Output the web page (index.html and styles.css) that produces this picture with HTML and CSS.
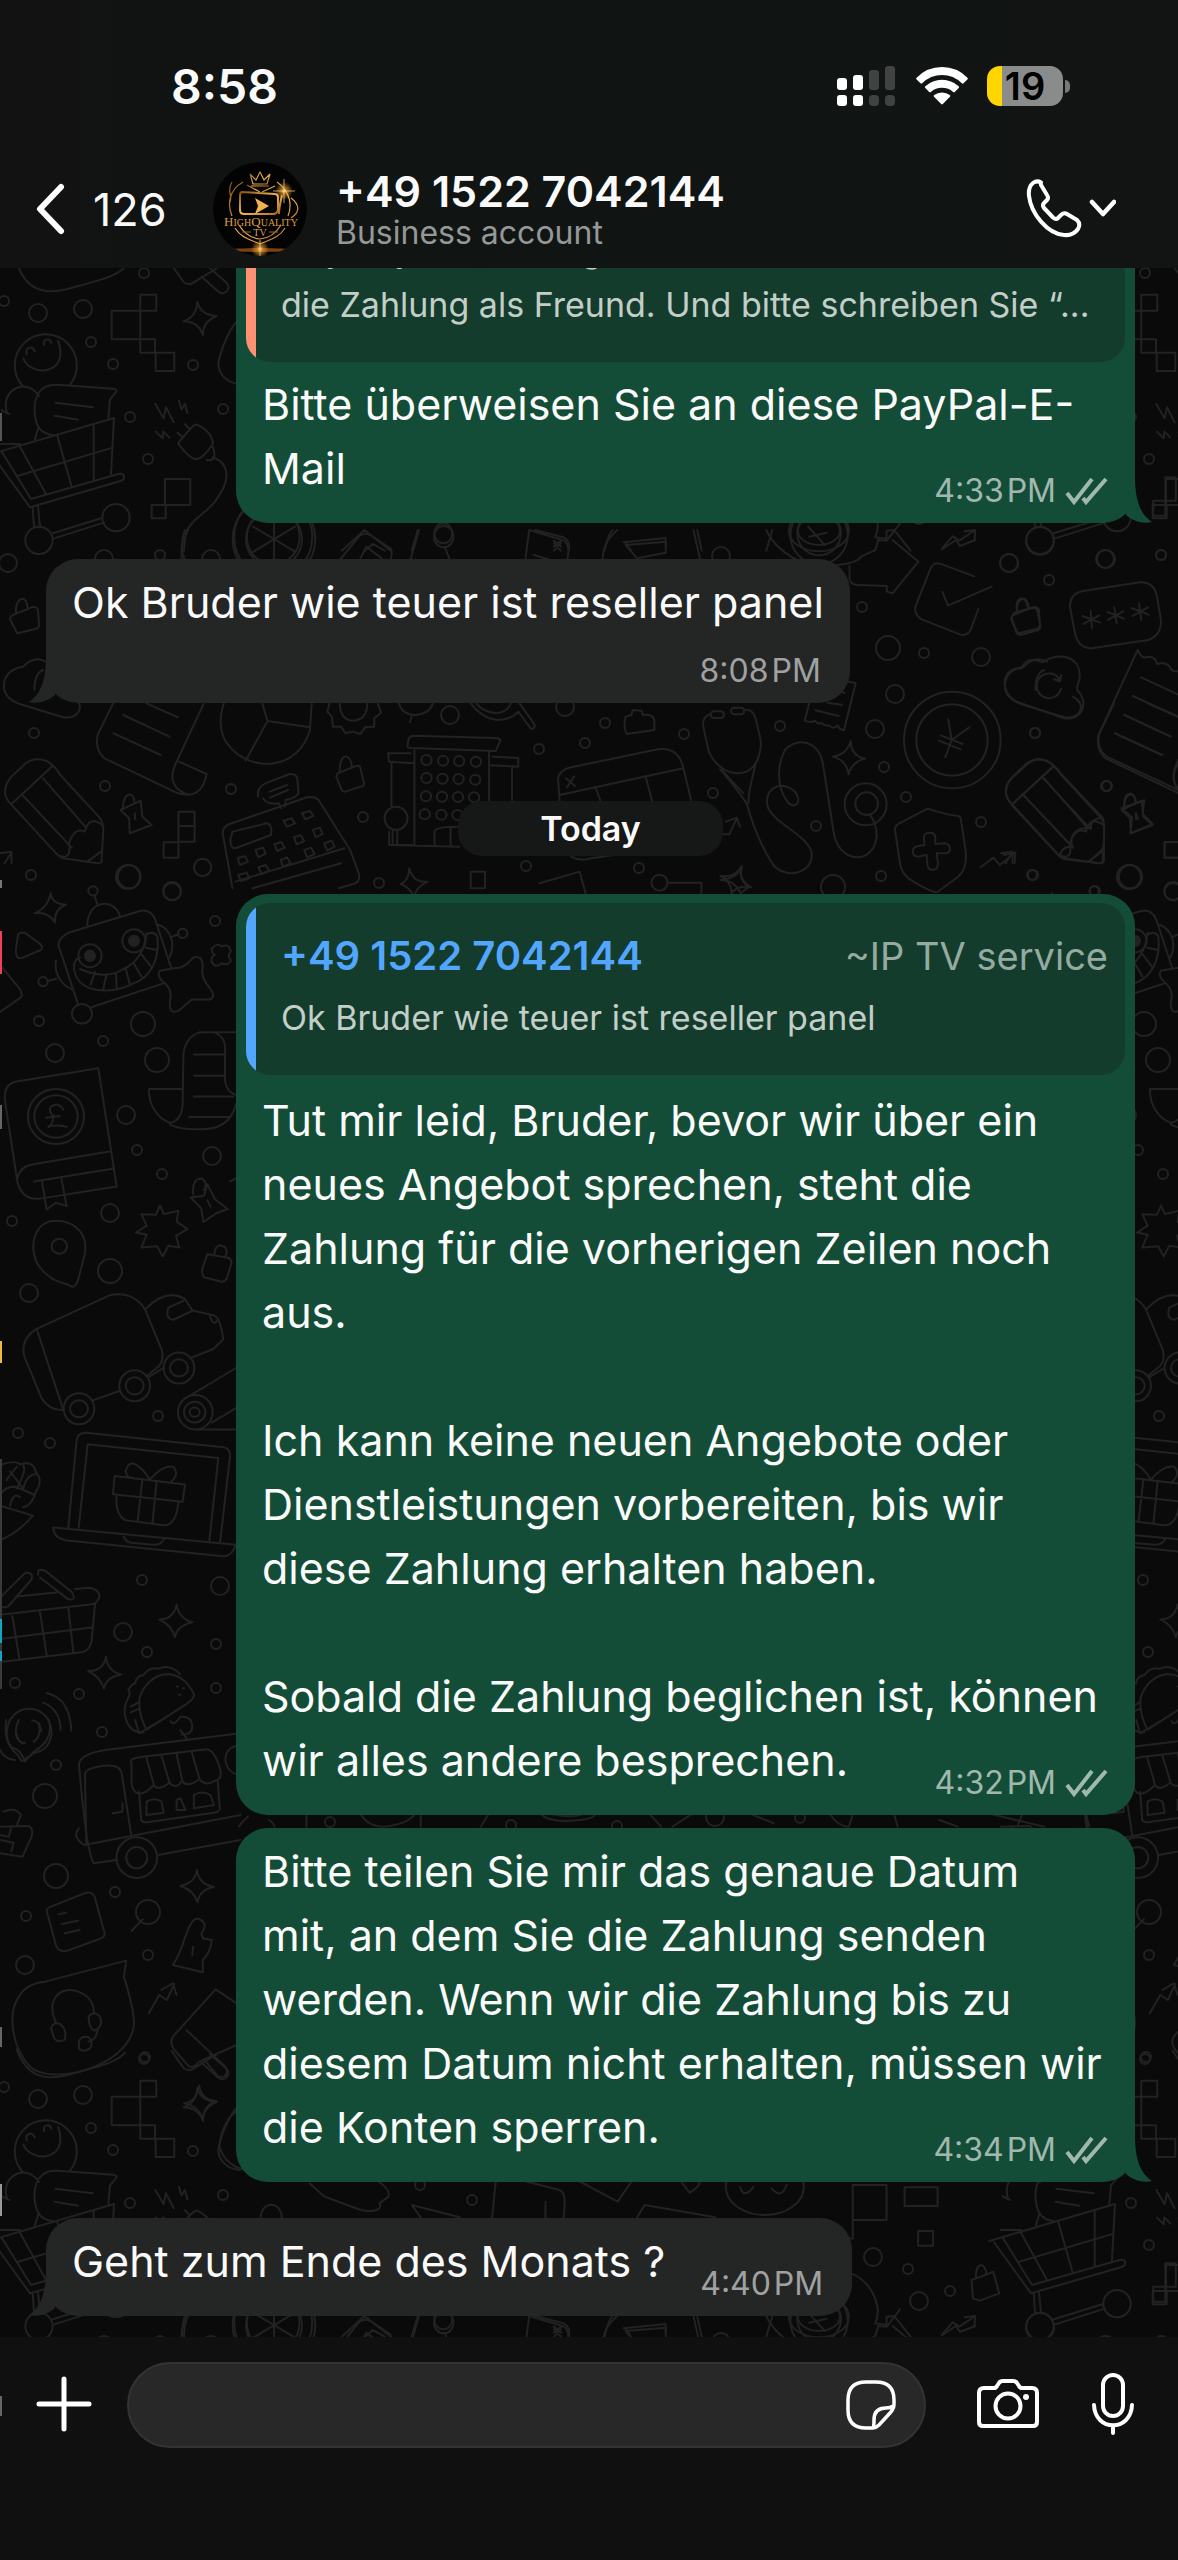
FILE: index.html
```html
<!DOCTYPE html>
<html lang="de">
<head>
<meta charset="utf-8">
<meta name="viewport" content="width=device-width, initial-scale=1">
<title>+49 1522 7042144</title>
<link rel="stylesheet" href="styles.css">
</head>
<body>
<svg class="wallpaper" aria-hidden="true">
  <defs>
    <g id="tile">
      <g transform="matrix(.3333 0 0 .3333 0 260)">
        <path d="M50 10C80 90 130 105 200 88C300 60 350 50 375 20M515 15L550 65Q565 80 585 65L650 25M605 50L655 95C675 110 695 85 680 68L630 25"/>
        <path d="M335 152H421V238H335ZM421 104H469V152H421ZM421 238H465V278H421ZM467 278H523V333H467Z"/>
        <path d="M592 126Q602 165 650 168Q608 185 609 225Q595 185 551 184Q590 170 592 126Z"/>
        <path d="M68 378A93 93 0 1 1 210 374M70 295C90 345 175 345 181 285Q182 262 174 243M80 283C74 262 98 255 104 274M132 255C128 235 150 232 154 249"/>
        <path d="M28 462Q10 455 5 450M22 460C0 400 60 360 100 390Q112 398 117 408M170 374L340 386Q355 388 347 398L330 418L325 475M170 374C120 372 100 410 104 460C108 500 120 520 160 526M166 428L278 442M163 467L234 479M116 500L104 540"/>
        <path d="M-35 585L342 474L333 642M5 575L93 717L355 642C375 636 378 658 362 663L90 742L-20 590M60 560L138 702M172 528L215 680M281 495V660M52 648L338 563M0 552H60M98 740L102 800M114 738L120 800M158 820L306 774M160 836L312 788"/>
        <circle cx="117" cy="841" r="41"/><circle cx="348" cy="773" r="41"/>
        <path d="M466 432L491 475L498 442L521 487M537 422L544 448L555 432L562 460M468 515L488 535L490 514L508 533M534 550C560 520 580 490 592 494Q640 520 638 553Q610 595 590 598Q570 598 534 550ZM555 493L569 507M533 518L547 530M638 560Q655 605 620 600M638 592C690 610 690 660 655 710C620 770 560 770 545 860V900"/>
        <path d="M495 657H571V735H495ZM455 735H497V775H455ZM710 185C680 220 660 280 655 310C655 350 690 370 720 372"/>
        <circle cx="822" cy="838" r="124"/><circle cx="822" cy="838" r="84"/>
        <path d="M822 770V900M760 800L885 875M885 800L760 875"/>
      </g>
      <g transform="matrix(.7513 0 0 .3333 0 394)">
        <path d="M412 10L432 50L480 90C500 100 510 85 505 70L517 50Q520 25 500 0M548 75L612 112M548 75L560 112M692 0L745 30Q755 40 750 112M726 65V112M660 0L655 112M768 0L822 65L842 0M858 75L952 112M858 75L848 112M905 0L918 38Q935 12 930 5M1135 15H1180V120H1135ZM1204 22H1248V78H1204ZM1222 153H1242V197H1222Z"/>
        <ellipse cx="1018" cy="20" rx="52" ry="85"/><path d="M985 20Q990 60 1003 20M1027 25Q1040 60 1047 15M1112 170L1135 176V120M1130 278C1160 300 1175 380 1165 430L1180 435V410L1190 408L1212 470M1255 460L1268 427L1277 440L1298 408M1284 412L1298 408L1297 440"/>
        <path d="M1308 288L1322 275L1330 340L1304 362L1295 355L1293 300ZM1299 295C1298 245 1312 245 1313 283M1535 365H1551V320H1565V250H1551V320H1535Z"/>
        <ellipse cx="1090" cy="410" rx="40" ry="62"/><ellipse cx="1090" cy="410" rx="28" ry="43"/><ellipse cx="361" cy="112" rx="14" ry="38"/><ellipse cx="590" cy="418" rx="12" ry="30"/>
        <path d="M245 470Q245 430 250 408M455 470L485 408L520 470M486 470L496 450L512 470M548 470L556 408M712 408L750 430Q760 440 757 470M737 440L747 458M747 440L737 458M805 470Q808 430 815 408M830 445L886 432V458M840 470L832 445M928 408L934 470M1020 470L1028 408"/>
      </g>
      <g transform="matrix(.574 0 0 .3333 0 530)">
        <ellipse cx="476" cy="20" rx="68" ry="125"/><ellipse cx="476" cy="20" rx="46" ry="83"/>
        <path d="M322 90Q312 50 322 0M592 90L625 20Q632 5 645 15L680 55Q685 70 680 90M628 85L638 50L665 85M715 90L730 0M775 52L784 90M915 90L922 0L980 30Q995 40 988 90M965 40L977 62M977 40L965 62M930 75L955 88M1050 90C1050 30 1070 10 1075 0M1090 45L1160 35V68L1110 85ZM1220 90L1208 0"/>
        <ellipse cx="773" cy="20" rx="17" ry="32"/><ellipse cx="1427" cy="15" rx="50" ry="88"/><ellipse cx="1427" cy="10" rx="38" ry="66"/>
        <path d="M1410 20L1440 8M1408 -10L1437 45M1335 0Q1350 60 1400 100L1450 107Q1495 100 1500 80L1525 60L1530 30L1545 32L1568 -20M1480 107V150Q1485 168 1500 165L1545 168V185L1555 190L1600 95L1555 30"/>
        <path d="M30 310L18 270Q16 262 22 255L55 232Q65 228 66 240L68 285Q68 295 60 298ZM28 250C25 200 48 190 48 236"/>
        <path d="M80 395Q60 375 40 410Q5 420 7 475Q10 510 40 525L110 562C140 570 150 520 125 500M75 420Q60 430 60 480"/>
        <path d="M197 520L170 615Q165 660 182 685L310 790C340 805 355 780 360 732L312 695M355 520L305 705C295 745 300 780 330 795M255 520L310 562M215 555L295 620M198 610L280 675"/>
        <path d="M390 520Q375 600 400 650C440 730 520 720 540 600L543 520M457 520L466 573L540 592M466 573L428 692"/>
        <path d="M574 520L570 545L578 560L580 590L594 590L602 610L615 605L628 612L636 592L652 590L652 565L664 548L658 520M592 520Q592 570 615 572Q640 570 640 520M695 520Q700 555 725 555Q750 550 754 520M718 555L714 577M820 520Q840 565 865 570Q890 570 903 545L925 597Q935 595 930 580L905 520M830 520Q840 545 865 550Q885 545 890 520"/>
        <path d="M1090 560L1100 555L1102 540L1118 542L1120 555Q1140 550 1140 575V600L1092 612Q1085 590 1090 560Z"/>
        <path d="M712 625L710 645Q708 652 716 654L864 663L872 630Q870 625 862 624L722 617Q714 618 712 625ZM722 656V945H678V905M852 663V815M678 695L676 670L715 670M678 695L722 700M858 680L903 684V710L855 706M682 700V830M892 710V810M678 945L800 950M757 945V905Q757 890 800 890M785 945V892"/>
        <ellipse cx="690" cy="865" rx="20" ry="35"/><path d="M684 900V942M692 900V942"/>
        <g><ellipse cx="743" cy="690" rx="9" ry="15"/><ellipse cx="772" cy="692" rx="9" ry="15"/><ellipse cx="800" cy="693" rx="9" ry="15"/><ellipse cx="829" cy="695" rx="9" ry="15"/><ellipse cx="743" cy="744" rx="9" ry="15"/><ellipse cx="771" cy="746" rx="9" ry="15"/><ellipse cx="799" cy="747" rx="9" ry="15"/><ellipse cx="828" cy="749" rx="9" ry="15"/><ellipse cx="742" cy="799" rx="9" ry="15"/><ellipse cx="770" cy="800" rx="9" ry="15"/><ellipse cx="798" cy="801" rx="9" ry="15"/><ellipse cx="826" cy="802" rx="9" ry="15"/><ellipse cx="740" cy="853" rx="9" ry="15"/><ellipse cx="769" cy="854" rx="9" ry="15"/><ellipse cx="797" cy="855" rx="9" ry="15"/></g>
        <path d="M975 815L972 745Q975 720 995 712L1140 660Q1180 645 1190 710L1204 810M975 795L1190 715M1038 775L1046 812M1125 740L1136 812M986 745L1002 768M1000 740L988 772M995 980Q1010 995 1030 985L1070 975"/>
        <path d="M10 800Q5 770 20 740L45 700Q60 680 80 692Q95 705 105 735L172 860Q180 875 180 900L177 990Q178 1000 170 1000L110 985Q102 980 95 965L15 815ZM20 822L90 710M40 797L125 953M75 745L150 893M105 978Q125 990 120 940Q130 890 148 905Q155 855 178 885M152 995L178 962"/>
        <path d="M450 800Q445 770 470 755L505 732Q515 730 518 745L520 790Q515 805 498 810L496 830M470 785L500 765M470 803L502 780M458 805Q465 825 486 820L490 835M405 1075L388 910Q388 890 400 882L535 802Q548 798 555 810L610 960L625 1030Q628 1050 620 1060L590 1075M410 1055L600 955M440 1075L594 1000M405 905L465 880Q475 885 472 915L410 955Q400 955 402 925Z"/>
        <path d="M494 872L508 865L514 880L500 890ZM526 850L540 843L546 858L532 868ZM445 960L458 953L463 970L450 982ZM478 943L490 936L496 953L483 963ZM512 922L524 915L530 933L517 943ZM545 900L557 893L562 912L550 922ZM414 985L427 978L432 995L418 1005ZM450 1012L463 1005L469 1022L456 1032ZM489 990L500 982L506 1000L493 1010ZM530 960L542 953L548 972L535 982ZM565 940L578 932L583 950L570 962ZM415 1035L430 1028L434 1045L420 1053Z"/>
        <path d="M588 730L620 708Q628 705 628 715L634 760Q635 768 628 770L602 785Q595 785 594 775L586 740ZM592 728C590 665 612 668 613 712M210 840L245 812L248 860L264 885L226 910L225 865ZM214 835C215 780 235 785 234 818M235 850V868M311 845H339V935H311ZM311 888H339M285 937H311V983H285ZM0 970L20 965L20 1000M20 967L8 1000"/>
        <path d="M713 1015Q720 1060 745 1055Q722 1075 722 1100Q712 1070 698 1062Q712 1055 713 1015ZM820 1025H845V1075H820ZM940 1060L1010 1025L1020 1090M1293 1010Q1285 1050 1305 1070L1290 1090Q1280 1050 1255 1050Q1285 1045 1293 1010ZM1165 1058H1222V1090"/>
        <ellipse cx="225" cy="1040" rx="20" ry="35"/><ellipse cx="353" cy="1012" rx="15" ry="26"/><ellipse cx="1149" cy="1058" rx="14" ry="24"/><ellipse cx="300" cy="1085" rx="15" ry="26"/>
      </g>
      <g transform="matrix(.3333 0 0 .3333 700 540)">
        <path d="M823 109L720 71Q700 66 692 85L646 200Q642 225 665 238L780 283Q800 290 812 270L835 207M727 155L744 197L875 140M725 28L768 0M768 0L780 18L825 0"/>
        <path d="M946 217L998 204Q1008 203 1012 212L1022 260Q1020 270 1010 272L962 285Q952 285 948 275L936 235Q936 222 946 217ZM952 213C940 170 980 160 984 205"/>
        <path d="M1150 153L1320 127Q1360 125 1370 165L1383 240Q1385 285 1345 300L1175 325Q1135 325 1125 280L1110 200Q1110 160 1150 153ZM1172 212L1176 264M1148 228L1200 248M1150 252L1198 226M1243 202L1250 250M1223 216L1272 236M1224 240L1270 214M1317 190L1324 240M1295 204L1346 224M1298 228L1344 202"/>
        <path d="M965 385Q980 345 1028 367C1070 335 1150 345 1138 420Q1130 440 1132 450C1170 490 1145 545 1090 534L950 485C895 455 905 380 965 385ZM1083 447A37 37 0 1 1 1080 420M1084 406L1080 424L1062 418"/>
        <circle cx="757" cy="600" r="145"/><circle cx="756" cy="600" r="107"/>
        <path d="M745 538L755 600L808 562M755 600L736 652M722 586L788 612M717 602L782 628"/>
        <path d="M1313 330L1200 575Q1185 620 1220 650L1440 752M1313 330Q1325 360 1345 350Q1368 350 1372 372Q1395 365 1408 378Q1415 400 1440 392M1323 412L1440 466M1298 468L1440 532M1272 524L1412 589M1247 580L1387 645M1437 670Q1410 700 1430 745"/>
        <path d="M438 423L467 430L432 571Q420 570 412 556Q400 570 388 556Q375 560 365 549Q355 555 345 542Q335 550 314 542L328 488M418 452L434 459M382 488L426 494M347 511L416 528"/>
        <rect x="32" y="514" width="40" height="20" rx="10"/><rect x="93" y="503" width="40" height="20" rx="10"/>
        <path d="M32 522Q5 530 10 560L25 630C50 700 140 730 172 660Q188 620 180 590L168 540Q160 505 133 510M65 690L130 760M168 665L150 745Q145 770 145 790M60 688Q90 720 140 790Q170 900 220 975C260 1020 340 1000 335 940C330 890 220 850 203 800C190 750 240 715 285 755C310 790 280 810 262 785C230 740 230 680 255 630C290 590 360 600 370 680L400 870C410 970 520 980 530 890Q530 850 510 825"/>
        <circle cx="497" cy="793" r="63"/><circle cx="500" cy="791" r="34"/>
        <path d="M452 604Q455 650 496 656Q455 665 446 703Q440 660 398 650Q440 645 452 604ZM123 980Q115 1020 153 1042Q110 1035 95 1060Q92 1020 61 1008Q105 1015 123 980Z"/>
        <path d="M683 806Q740 825 775 828Q783 830 783 840L798 940Q800 990 775 1010L712 1056Q700 1060 640 1025Q605 1005 600 970L585 870Q583 860 595 852ZM672 895Q670 878 690 878Q705 878 706 892V912L735 910Q750 912 750 928Q748 940 735 940H710L714 970Q714 990 697 990Q682 988 682 970L680 945L655 950Q638 948 638 932Q640 920 655 918L674 915Z"/>
        <path d="M842 982L880 953L900 975L944 940M912 945L946 938L944 970M68 883H88L110 835M78 845L110 833L120 860"/>
        <path d="M920 770Q912 740 930 720L985 670Q1020 645 1058 675L1205 830Q1213 840 1212 860V960Q1212 970 1200 970L1095 958Q1080 955 1070 940L935 795ZM935 795L1060 680M970 765L1120 923M1025 710L1172 868M1080 945Q1090 915 1118 922Q1105 885 1140 867Q1170 860 1172 868Q1170 835 1205 835M1168 965L1210 925"/>
        <path d="M1265 805L1333 781L1328 822L1358 852L1292 880L1296 832ZM1275 800C1265 755 1305 745 1308 788M1308 820L1314 838M1440 906H1394V953H1440"/>
      </g>
      <g transform="matrix(.3333 0 0 .5741 0 880)">
        <path d="M152 23Q155 42 198 43Q162 50 165 74Q145 55 104 58Q145 48 152 23ZM48 120L54 95Q60 90 75 92L120 111Q132 118 122 122L65 136Q45 138 48 120ZM0 148L60 190Q70 200 62 205L0 230"/>
        <path d="M205 92L420 54Q450 50 465 68L513 152M262 82C260 35 340 30 360 62M293 43L282 26M475 78C510 85 530 110 508 135M512 100L536 94M143 176L170 172M168 140C160 165 190 185 215 190M205 92Q165 105 180 122L235 218M272 222L490 180"/>
        <ellipse cx="279" cy="19" rx="14" ry="8"/><ellipse cx="548" cy="93" rx="14" ry="8"/><ellipse cx="129" cy="177" rx="14" ry="8"/><ellipse cx="270" cy="132" rx="35" ry="20"/><ellipse cx="402" cy="106" rx="35" ry="20"/><ellipse cx="246" cy="233" rx="30" ry="17"/>
        <ellipse class="solid" cx="270" cy="132" rx="15" ry="9"/><ellipse class="solid" cx="402" cy="106" rx="15" ry="9"/>
        <path d="M222 148C220 200 340 200 400 180C450 170 480 140 472 98Q462 88 440 95M222 148Q225 138 240 135M240 155Q320 175 370 155Q430 140 440 92M272 182L285 160M310 189L320 164M350 189L348 163M390 183L378 156M424 168L402 146M452 150L425 130M470 122L438 118"/>
        <path d="M480 158Q470 165 485 175Q520 190 510 210Q505 235 535 228L575 208L630 208Q648 203 632 190Q600 170 608 150Q608 130 580 135Q550 155 530 153ZM635 120Q650 108 665 116Q690 110 692 125Q680 130 693 140Q685 150 665 145Q645 155 635 142Q632 135 645 130Q635 128 635 120Z"/>
        <path d="M708 265H600Q550 275 550 310L548 390Q545 420 510 423C470 415 445 390 447 364H548M645 266Q680 275 675 300V350Q680 370 710 375M510 426Q540 435 600 434Q690 435 708 390M582 304H672M582 341H672M582 377H700M568 413H690M708 520L690 525"/>
        <path d="M15 385Q10 355 50 351L295 328L350 534L120 555Q65 558 52 525ZM52 520Q60 498 100 495L328 473M102 525L338 503M126 525L140 574L168 562L200 568L184 520"/>
        <ellipse cx="168" cy="412" rx="84" ry="48"/><ellipse cx="168" cy="412" rx="65" ry="37"/><path d="M190 400Q175 385 152 395Q145 405 160 410Q160 425 145 430Q170 425 200 430M138 414L180 411"/>
        <path d="M480 567L492 582L535 576L530 595L562 608L528 620L538 640L505 637L488 656L472 638L424 640L440 618L408 614L440 602L424 582L468 583ZM572 553L612 550L622 530L645 556L683 573L650 580L610 596L604 572ZM580 548Q575 520 605 520Q625 528 612 540M622 558L632 569M622 652L685 658Q698 662 693 670L680 695Q670 702 660 699L612 692Q602 685 610 672ZM643 653Q645 635 665 637Q688 640 676 657"/>
        <path d="M205 705Q225 715 235 695L255 650C265 610 210 590 155 594C95 600 85 650 120 675Q150 698 205 705Z"/><ellipse cx="178" cy="638" rx="23" ry="13"/>
        <path d="M110 782L330 723Q400 715 435 748L485 818Q495 840 470 850L440 864M358 890L280 906M190 923Q150 925 125 903L73 830Q60 800 110 782ZM435 748Q500 710 555 730L578 750L640 758Q660 760 670 800L640 817L570 833M578 750L520 766Q495 765 505 745L550 733M630 760Q640 780 655 765M448 865L490 850"/>
        <ellipse cx="237" cy="921" rx="46" ry="27"/><ellipse cx="237" cy="921" rx="27" ry="15"/><ellipse cx="404" cy="881" rx="46" ry="27"/><ellipse cx="404" cy="881" rx="27" ry="15"/><ellipse cx="537" cy="850" rx="46" ry="27"/><ellipse cx="537" cy="850" rx="27" ry="15"/><ellipse cx="586" cy="927" rx="52" ry="30"/><ellipse cx="584" cy="927" rx="32" ry="18"/><ellipse cx="584" cy="927" rx="15" ry="8"/>
        <path d="M570 898L708 850M635 945L708 920M590 957H708"/>
        <path d="M205 1128L230 975Q235 962 260 963L670 988Q692 990 690 1005L660 1155M236 1128L263 983L655 1007L628 1152M160 1128L708 1158Q695 1178 670 1178L195 1150Q160 1145 160 1128ZM370 1140Q375 1155 400 1155L460 1158Q485 1158 492 1148M344 1038L555 1053L548 1083L339 1070ZM350 1073Q345 1105 375 1115L490 1124Q530 1124 535 1083M427 1044L413 1117M470 1047L457 1122M450 1044C410 1010 385 1010 377 1030Q380 1042 400 1041M450 1044Q490 1018 520 1022Q540 1035 512 1049"/>
        <path d="M5 1018Q50 1010 60 1018Q100 1010 108 1032Q130 1045 108 1065Q95 1090 70 1092M20 1045L50 1022M30 1030L70 1060Q80 1035 108 1035M50 1060Q80 1030 70 1020M0 1070Q30 1050 60 1060L100 1070M30 1090Q40 1065 60 1075M0 1090L98 1107Q60 1135 0 1150"/>
        <path d="M0 1250L75 1207Q100 1205 95 1218L25 1265Q5 1270 0 1262M115 1210Q110 1198 135 1203L215 1240Q232 1255 205 1253L120 1215M50 1248L170 1241M225 1235L265 1233Q300 1235 298 1250Q290 1262 270 1262L0 1280M285 1262L275 1325Q270 1343 245 1345L0 1362M37 1282L58 1356M120 1275L140 1350M205 1268L220 1345M0 1322L275 1302"/>
        <path d="M530 1262Q535 1285 577 1293Q530 1300 525 1319Q515 1298 478 1288Q520 1288 530 1262ZM318 1353Q322 1378 364 1384Q320 1388 312 1408Q300 1388 265 1378Q310 1378 318 1353Z"/>
        <path d="M430 1485Q380 1485 374 1450C370 1430 400 1420 385 1410Q405 1395 405 1400Q410 1385 430 1385Q450 1370 475 1374Q510 1365 540 1383M440 1480C420 1460 410 1430 425 1415C460 1375 540 1370 582 1418Q585 1425 560 1435ZM512 1465Q520 1475 540 1458Q575 1455 577 1475Q575 1490 545 1488M530 1405H534M548 1408H552M537 1419H541M392 1440L415 1433M392 1450L420 1443"/>
        <path d="M55 1525Q20 1510 20 1485C25 1430 150 1430 155 1485Q150 1515 105 1520L65 1535ZM48 1485Q55 1505 75 1503M97 1464Q120 1465 124 1483M130 1433Q180 1445 182 1480M140 1416Q210 1425 214 1482M0 1515Q10 1530 45 1533"/>
      </g>
      <g transform="matrix(.7513 0 0 .3333 0 1720)">
        <path d="M33 125Q28 90 18 85Q5 70 8 0M65 0Q72 60 45 95L33 125M25 0Q15 50 30 70M45 65Q55 50 52 10M180 0L185 40L215 0M240 30L250 60M125 430Q115 400 105 130Q110 100 140 90L320 40M105 325Q95 350 112 375L320 285M125 430L155 420M210 405L320 360M115 375L113 160Q115 145 135 138Q160 130 162 160L175 350M150 280L163 275V250M175 130Q170 115 190 110L275 88Q285 90 292 140Q298 180 285 183Q275 200 265 178Q250 205 242 183Q235 210 225 188Q210 215 205 195Q180 250 175 190ZM195 115L205 195M215 108L226 190M235 102L243 185M255 95L266 180M320 75Q300 80 300 120Q302 160 320 165M185 215L188 300Q190 310 200 305L285 278Q295 275 292 255L290 185M195 285V245Q205 230 215 245L218 278L195 285M235 270V240L240 235L247 270ZM258 265V225Q270 210 280 225L285 255Z"/>
        <ellipse cx="182" cy="413" rx="27" ry="61"/><ellipse cx="182" cy="413" rx="14" ry="32"/>
        <path d="M5 275Q20 260 28 285L22 318M0 320L38 318Q45 325 42 350L30 410L0 400M15 320L12 350L0 345M0 360L18 368L15 395"/>
        <path d="M262 450Q265 495 285 500Q265 510 263 547Q258 510 240 498Q260 490 262 450ZM265 1097Q268 1140 288 1143Q272 1155 270 1195Q262 1155 245 1150Q262 1145 265 1097Z"/>
        <path d="M68 560Q60 565 63 580L75 680Q80 698 90 692L135 655Q142 645 138 630L126 530Q122 512 112 520ZM78 583L88 578M82 612L104 602M86 640L106 630M190 598L175 633M245 660C250 630 255 590 265 597Q278 610 268 640L270 655L282 660Q280 700 270 720V757L230 735Q240 700 245 660ZM257 680L256 705M198 880L212 825L222 840L232 792M215 810L230 790L235 825"/>
        <path d="M168 722L165 770Q180 880 178 920C170 1040 70 1100 40 1040C15 980 10 880 25 830Q35 790 60 785ZM75 910C60 840 80 800 100 812C120 825 125 850 125 880M68 925Q70 905 80 912Q90 930 86 960Q78 970 72 955ZM118 890Q125 870 133 890Q138 920 126 932Q118 925 118 890ZM130 930Q128 960 118 965M105 965Q108 945 118 952Q125 965 120 985Q110 1000 105 985Z"/>
        <path d="M315 850L287 808L230 950Q225 970 232 990L252 1040Q258 1045 265 1025L315 975M248 930L300 1040Q305 1060 298 1070Q290 1075 287 1060L272 1020"/>
        <path d="M320 1165Q295 1200 292 1280Q300 1340 330 1352M480 283Q490 320 510 320Q540 315 552 283M408 283V320M560 283V320M650 283L640 320M720 283Q730 305 755 303Q790 300 792 283M735 283Q760 295 775 283M865 283L880 320M895 320L920 283M1000 283L1030 310M1105 283Q1115 320 1130 320L1135 283M1190 283L1195 320M1250 300L1275 320M1320 283L1390 320M1445 283L1450 320M330 290Q320 310 318 320M358 300Q365 310 365 320"/>
      </g>
      <circle cx="4" cy="301" r="5"/><circle cx="38" cy="313" r="9"/><circle cx="83" cy="309" r="9"/><circle cx="144" cy="273" r="5"/><circle cx="91" cy="342" r="5"/><circle cx="113" cy="364" r="5"/><circle cx="193" cy="365" r="5"/><circle cx="130" cy="417" r="5"/><circle cx="223" cy="409" r="5"/><circle cx="148" cy="459" r="5"/><circle cx="160" cy="555" r="5"/><circle cx="104" cy="559" r="9"/><circle cx="8" cy="563" r="9"/><circle cx="211" cy="559" r="9"/><circle cx="472" cy="414" r="5"/><circle cx="420" cy="399" r="5"/><circle cx="873" cy="471" r="9"/><circle cx="908" cy="483" r="5"/><circle cx="950" cy="505" r="5"/><circle cx="919" cy="515" r="9"/>
      <circle cx="34" cy="733" r="5"/><circle cx="105" cy="786" r="5"/><circle cx="231" cy="789" r="5"/><circle cx="363" cy="817" r="5"/><circle cx="450" cy="715" r="9"/><circle cx="539" cy="749" r="5"/><circle cx="585" cy="743" r="5"/><circle cx="605" cy="723" r="5"/><circle cx="684" cy="734" r="5"/><circle cx="565" cy="707" r="9"/><circle cx="526" cy="866" r="5"/><circle cx="379" cy="883" r="5"/><circle cx="639" cy="868" r="5"/><circle cx="31" cy="875" r="5"/>
      <circle cx="721" cy="556" r="9"/><circle cx="862" cy="607" r="5"/><circle cx="888" cy="648" r="12"/><circle cx="924" cy="653" r="5"/><circle cx="981" cy="657" r="9"/><circle cx="895" cy="694" r="9"/><circle cx="875" cy="729" r="9"/><circle cx="780" cy="726" r="5"/><circle cx="884" cy="767" r="5"/><circle cx="906" cy="797" r="5"/><circle cx="816" cy="826" r="5"/><circle cx="713" cy="793" r="5"/><circle cx="981" cy="822" r="5"/><circle cx="1035" cy="733" r="5"/><circle cx="1009" cy="563" r="9"/><circle cx="1049" cy="580" r="5"/><circle cx="1040" cy="541" r="14"/><circle cx="1106" cy="559" r="9"/><circle cx="1161" cy="555" r="5"/><circle cx="881" cy="876" r="5"/><circle cx="833" cy="887" r="12"/><circle cx="1033" cy="875" r="5"/><circle cx="1130" cy="877" r="12"/><circle cx="1107" cy="786" r="5"/><circle cx="1095" cy="891" r="5"/>
      <circle cx="128" cy="877" r="12"/><circle cx="172" cy="891" r="9"/><circle cx="215" cy="921" r="5"/><circle cx="39" cy="1021" r="5"/><circle cx="143" cy="1024" r="12"/><circle cx="103" cy="1041" r="5"/><circle cx="55" cy="1053" r="9"/><circle cx="157" cy="1060" r="12"/><circle cx="126" cy="1115" r="9"/><circle cx="137" cy="1150" r="5"/><circle cx="212" cy="1156" r="9"/><circle cx="162" cy="1174" r="5"/><circle cx="110" cy="1213" r="9"/><circle cx="12" cy="1221" r="5"/><circle cx="110" cy="1271" r="12"/><circle cx="29" cy="1293" r="9"/><circle cx="158" cy="1416" r="5"/><circle cx="18" cy="1433" r="5"/><circle cx="50" cy="1443" r="5"/><circle cx="142" cy="1580" r="5"/><circle cx="220" cy="1586" r="9"/><circle cx="123" cy="1632" r="9"/><circle cx="147" cy="1652" r="5"/><circle cx="216" cy="1644" r="5"/><circle cx="15" cy="1683" r="5"/><circle cx="79" cy="1694" r="5"/><circle cx="216" cy="1688" r="5"/><circle cx="102" cy="1732" r="5"/><circle cx="56" cy="1765" r="5"/>
      <circle cx="45" cy="1796" r="12"/><circle cx="56" cy="1876" r="12"/><circle cx="115" cy="1892" r="5"/><circle cx="148" cy="1912" r="12"/><circle cx="26" cy="1916" r="5"/><circle cx="148" cy="1955" r="5"/><circle cx="25" cy="1965" r="9"/><circle cx="145" cy="2057" r="5"/><circle cx="330" cy="1822" r="5"/><circle cx="511" cy="1825" r="5"/><circle cx="617" cy="1826" r="5"/><circle cx="715" cy="1817" r="9"/><circle cx="800" cy="1818" r="5"/>
    </g>
  </defs>
  <use href="#tile"/><use href="#tile" x="1001"/><use href="#tile" y="1786"/><use href="#tile" x="1001" y="1786"/>
</svg>

<header class="top">
  <div class="status">
    <time class="clock">8:58</time>
    <div class="indicators">
      <svg width="60" height="40" viewBox="0 0 60 40" role="img" aria-label="Signal"><g fill="#fff"><rect y="12" width="10" height="12" rx="3"/><rect x="16" y="9" width="10" height="15" rx="3"/><rect y="29" width="10" height="11" rx="3"/><rect x="16" y="29" width="10" height="11" rx="3"/></g><g fill="#404342"><rect x="32" y="4" width="10" height="20" rx="3"/><rect x="48" width="10" height="24" rx="3"/><rect x="32" y="29" width="10" height="11" rx="4"/><rect x="48" y="29" width="10" height="11" rx="4"/></g></svg>
      <svg width="52" height="40" viewBox="0 0 52 40" role="img" aria-label="WLAN"><g fill="#fff"><path d="M.6 13.500Q-.3 12.600.6 11.700Q11 1 26 1T51.400 11.700Q52.300 12.600 51.400 13.500L47.500 17.300Q46.700 18 45.800 17.200Q37.500 9 26 9T6.200 17.200Q5.300 18 4.500 17.300Z"/><path d="M9.300 22Q8.400 21.200 9.300 20.300Q16.500 13.800 26 13.800T42.700 20.300Q43.600 21.200 42.700 22L38.800 26Q38 26.700 37.100 26Q32.500 21.800 26 21.800T14.900 26Q14 26.700 13.200 26Z"/><path d="M18 30.700Q17.200 29.800 18.200 29Q21.500 26.500 26 26.500T33.800 29Q34.800 29.800 34 30.700L26.800 38Q26 38.800 25.200 38Z"/></g></svg>
      <div class="battery"><span>19</span></div>
    </div>
  </div>
  <div class="bar">
    <button class="back" aria-label="Zurück, 126 ungelesene">
      <svg width="32" height="54" viewBox="0 0 32 54" fill="none" stroke="#fff" stroke-width="6" stroke-linecap="round" stroke-linejoin="round"><path d="M26 5L5 27L26 49"/></svg>
      <span>126</span>
    </button>
    <svg class="avatar" viewBox="0 0 94 94" role="img" aria-label="HighQuality TV">
      <defs>
        <linearGradient id="gold" x1="0" y1="0" x2="1" y2="1"><stop offset="0" stop-color="#8a4e12"/><stop offset=".5" stop-color="#f3b954"/><stop offset="1" stop-color="#a8651c"/></linearGradient>
        <radialGradient id="glow"><stop offset="0" stop-color="#fff0c0"/><stop offset=".3" stop-color="#f0a030" stop-opacity=".7"/><stop offset="1" stop-color="#f0a030" stop-opacity="0"/></radialGradient>
        <clipPath id="disc"><circle cx="47" cy="47" r="47"/></clipPath>
      </defs>
      <g clip-path="url(#disc)">
        <circle cx="47" cy="47" r="47" fill="#040303"/>
        <g fill="none" stroke="url(#gold)" stroke-width="1.200">
          <path d="M37 12L40 22H54L57 12L51 18L47 10L43 18ZM38 24H56"/>
          <path d="M30 20C16 28 14 42 19 54M64 20C78 30 79 44 75 54M22 66C28 76 38 78 47 82C56 78 66 76 72 66M19 20C13 30 20 32 17 40M78 36C86 42 88 50 78 56M26 63Q34 76 47 77Q60 76 68 63"/>
          <path d="M47 30L34 23M49 30L62 24"/>
          <path d="M29 30L62 32Q65 32 65 36V48Q64 52 60 52H31Q27 52 27 48V34Q27 30 29 30ZM69 33Q66 46 66 52" stroke-width="2"/>
        </g>
        <path d="M42 36L56 44L42 52L45 44Z" fill="#efb24c"/>
        <ellipse cx="47" cy="88" rx="30" ry="2" fill="#7a4210"/>
        <circle cx="71" cy="29" r="9" fill="url(#glow)"/><circle cx="47" cy="87" r="9" fill="url(#glow)"/>
        <path d="M71 17V41M60 29H82M47 78V94" stroke="#ffd98a" stroke-width=".7"/>
        <text x="48" y="64" text-anchor="middle" fill="#d89b45" font-family="Liberation Serif, serif" font-size="13">H<tspan font-size="10">IGH</tspan>Q<tspan font-size="10">UALITY</tspan></text>
        <text x="47" y="74" text-anchor="middle" fill="#d89b45" font-family="Liberation Serif, serif" font-size="10">TV</text>
        <path d="M29 70H38M56 70H65" stroke="#9a6020"/>
      </g>
    </svg>
    <div class="contact">
      <h1>+49 1522 7042144</h1>
      <p>Business account</p>
    </div>
    <button class="call" aria-label="Anrufen">
      <svg width="90" height="62" viewBox="0 0 90 62" fill="none" stroke="#fff" stroke-width="4" stroke-linecap="round" stroke-linejoin="round"><path d="M15 4.500Q11 2 7 5Q2 9 3 18C5 36 22 56 38 57Q47 58 52 51Q55 46 51 42L41 36Q38 34 35 37L32 40Q30 42 27 39.500L18 30Q16 27 18 25L21 22Q23 20 21 17L15 7Q15 5 13.500 4Z"/><path d="M66 24L77 36L88 24" stroke-width="4.500"/></svg>
    </button>
  </div>
</header>

<main class="chat">
  <article class="bubble out">
    <blockquote class="quote salmon">
      <p class="excerpt">Hey PayPal Zahlung<br>die Zahlung als Freund. Und bitte schreiben Sie “...</p>
    </blockquote>
    <p class="text">Bitte überweisen Sie an diese PayPal-E-<br>Mail</p>
    <div class="meta"><time>4:33&#8202;PM</time><svg class="ticks" viewBox="0 0 44 30"><path d="M2 17L9 26L27 3M18 22L21 26L41 3"/></svg></div>
    <svg class="tail" viewBox="0 0 26 46"><path d="M9 0C9 24 15 38 26 45C18 47 8 45 0 38L0 0Z"/></svg>
  </article>

  <article class="bubble in spaced">
    <p class="text">Ok Bruder wie teuer ist reseller panel</p>
    <div class="meta"><time>8:08&#8202;PM</time></div>
    <svg class="tail" viewBox="0 0 26 46"><path d="M17 0C17 24 11 38 0 45C8 47 18 45 26 38L26 0Z"/></svg>
  </article>

  <h2 class="day">Today</h2>

  <article class="bubble out">
    <blockquote class="quote blue">
      <header><strong>+49 1522 7042144</strong><span>~IP TV service</span></header>
      <p class="excerpt">Ok Bruder wie teuer ist reseller panel</p>
    </blockquote>
    <p class="text">Tut mir leid, Bruder, bevor wir über ein<br>neues Angebot sprechen, steht die<br>Zahlung für die vorherigen Zeilen noch<br>aus.<br><br>Ich kann keine neuen Angebote oder<br>Dienstleistungen vorbereiten, bis wir<br>diese Zahlung erhalten haben.<br><br>Sobald die Zahlung beglichen ist, können<br>wir alles andere besprechen.</p>
    <div class="meta"><time>4:32&#8202;PM</time><svg class="ticks" viewBox="0 0 44 30"><path d="M2 17L9 26L27 3M18 22L21 26L41 3"/></svg></div>
  </article>

  <article class="bubble out follow">
    <p class="text">Bitte teilen Sie mir das genaue Datum<br>mit, an dem Sie die Zahlung senden<br>werden. Wenn wir die Zahlung bis zu<br>diesem Datum nicht erhalten, müssen wir<br>die Konten sperren.</p>
    <div class="meta"><time>4:34&#8202;PM</time><svg class="ticks" viewBox="0 0 44 30"><path d="M2 17L9 26L27 3M18 22L21 26L41 3"/></svg></div>
    <svg class="tail" viewBox="0 0 26 46"><path d="M9 0C9 24 15 38 26 45C18 47 8 45 0 38L0 0Z"/></svg>
  </article>

  <article class="bubble in inline">
    <p class="text">Geht zum Ende des Monats ?</p>
    <div class="meta"><time>4:40&#8202;PM</time></div>
    <svg class="tail" viewBox="0 0 26 46"><path d="M17 0C17 24 11 38 0 45C8 47 18 45 26 38L26 0Z"/></svg>
  </article>
</main>

<footer class="composer">
  <button aria-label="Anhang"><svg width="56" height="56" viewBox="0 0 56 56" stroke="#fff" stroke-width="5" stroke-linecap="round"><path d="M28 3V53M3 28H53"/></svg></button>
  <div class="field">
    <input type="text" aria-label="Nachricht">
    <button aria-label="Sticker"><svg width="50" height="50" viewBox="0 0 50 50" fill="none" stroke="#fff" stroke-width="3.500" stroke-linejoin="round"><path d="M27 48H20Q2 48 2 30V20Q2 2 20 2H30Q48 2 48 20V24Q48 29 44 33L33 45Q30 48 27 48ZM27 48Q28 46 28 40Q28 28 40 28Q45 28 47 26"/></svg></button>
  </div>
  <button aria-label="Kamera"><svg width="64" height="50" viewBox="0 0 64 50" fill="none" stroke="#fff" stroke-width="4" stroke-linejoin="round"><path d="M8 9H18Q20 9 21 7L23 4Q24 2 27 2H37Q40 2 41 4L43 7Q44 9 46 9H56Q61 9 61 14V43Q61 47 57 47H7Q3 47 3 43V14Q3 9 8 9Z"/><circle cx="32" cy="27" r="12.500"/><circle cx="50" cy="18" r="3" fill="#fff" stroke="none"/></svg></button>
  <button aria-label="Sprachnachricht"><svg width="44" height="64" viewBox="0 0 44 64" fill="none" stroke="#fff" stroke-width="4" stroke-linecap="round"><rect x="12" y="3" width="20" height="41" rx="10"/><path d="M3 33C4 60 40 60 41 33M22 54V61"/></svg></button>
</footer>

<svg class="edge" width="2" aria-hidden="true"><rect y="880" width="2" height="8" fill="#777"/><rect y="931" width="2" height="43" fill="#f0415a"/><rect y="1105" width="2" height="24" fill="#666"/><rect y="1341" width="2" height="22" fill="#f0b93c"/><rect y="1459" width="2" height="230" fill="#3a3a3a"/><rect y="1619" width="2" height="24" fill="#12a6c2"/><rect y="1651" width="2" height="10" fill="#12a6c2"/><rect y="2027" width="2" height="20" fill="#666"/><rect y="2184" width="2" height="32" fill="#999"/><rect y="2396" width="2" height="20" fill="#666"/><rect y="413" width="2" height="28" fill="#555"/></svg>
</body>
</html>
```
FILE: styles.css
```css
* {
  box-sizing: border-box;
  margin: 0;
  padding: 0;
}

body {
  position: relative;
  display: flex;
  flex-direction: column;
  height: 100vh;
  overflow: hidden;
  background: #0a0a0a;
  color: #fafafa;
  font-family: Inter, "Liberation Sans", sans-serif;
}

button {
  display: flex;
  align-items: center;
  border: 0;
  background: none;
  color: inherit;
  font: inherit;
}

svg {
  display: block;
  flex: none;
}

.wallpaper {
  position: absolute;
  inset: 0;
  z-index: -1;
  width: 100%;
  height: 100%;
  fill: none;
  stroke: #222;
  stroke-width: 2;
  stroke-linecap: round;
  stroke-linejoin: round;
}

.wallpaper path,
.wallpaper ellipse,
.wallpaper circle,
.wallpaper rect {
  vector-effect: non-scaling-stroke;
}

.wallpaper .solid {
  fill: #222;
}

.edge {
  position: absolute;
  left: 0;
  top: 0;
  height: 100%;
}

/* Header */

.top {
  flex: none;
  height: 268px;
  background: linear-gradient(90deg, #121212, #101513 40%, #111413);
}

.status {
  display: flex;
  justify-content: space-between;
  align-items: center;
  height: 150px;
  padding: 22px 115px 0 171px;
}

.clock {
  font-size: 48px;
  font-weight: 600;
}

.indicators {
  display: flex;
  align-items: center;
  gap: 19px;
}

.battery {
  position: relative;
  width: 76px;
  height: 40px;
  border-radius: 13px;
  background: linear-gradient(90deg, #ffd600 15px, #8a8c8b 15px);
  color: #000;
  font-size: 38px;
  font-weight: 600;
  line-height: 40px;
  text-align: center;
}

.battery::after {
  content: "";
  position: absolute;
  right: -7px;
  top: 14px;
  width: 5px;
  height: 13px;
  border-radius: 0 5px 5px 0;
  background: #777;
}

.bar {
  display: flex;
  align-items: center;
  height: 118px;
  padding: 0 62px 0 35px;
}

.back {
  gap: 26px;
  width: 178px;
  font-size: 45px;
}

.avatar {
  width: 94px;
  height: 94px;
}

.contact {
  flex: 1;
  padding-left: 29px;
}

.contact h1 {
  font-size: 43px;
  font-weight: 600;
  line-height: 48px;
}

.contact p {
  color: #969897;
  font-size: 32px;
  line-height: 36px;
}

/* Conversation */

.chat {
  display: flex;
  flex: 1;
  flex-direction: column;
  justify-content: flex-end;
  min-height: 0;
  overflow: hidden;
  padding: 0 43px 21px 46px;
}

.bubble {
  position: relative;
  display: flex;
  flex: none;
  flex-direction: column;
  border-radius: 32px;
  padding: 11px 26px 12px;
  color: #fafafa;
}

.out {
  align-self: flex-end;
  width: 899px;
  background: #144d37;
}

.in {
  align-self: flex-start;
  margin-top: 36px;
  background: #242626;
}

.follow {
  margin-top: 13px;
}

.text {
  font-size: 43px;
  line-height: 64px;
  white-space: nowrap;
}

.meta {
  display: flex;
  align-self: flex-end;
  align-items: center;
  gap: 9px;
  height: 40px;
  font-size: 32px;
  line-height: 40px;
  white-space: nowrap;
}

.out .meta {
  margin-top: -29px;
  color: #a1b8af;
}

.in .meta {
  margin-right: 3px;
  color: #a0a1a1;
}

.spaced .meta {
  margin-top: 17px;
}

.inline {
  flex-direction: row;
  gap: 35px;
}

.inline .text {
  margin-bottom: 11px;
}

.ticks {
  width: 44px;
  height: 30px;
  fill: none;
  stroke: #a1b8af;
  stroke-width: 4;
}

.tail {
  position: absolute;
  bottom: 0;
  width: 26px;
  height: 46px;
}

.out .tail {
  right: -17px;
  fill: #144d37;
}

.in .tail {
  left: -17px;
  fill: #242626;
}

.quote {
  margin: -2px -16px 13px;
  border-radius: 24px;
  padding: 27px 17px 30px 35px;
  background: linear-gradient(90deg, var(--accent) 10px, #133c2c 10px);
}

.salmon {
  --accent: #ff9272;
  margin-bottom: 10px;
}

.blue {
  --accent: #53a6fd;
}

.quote header {
  display: flex;
  justify-content: space-between;
  margin-bottom: 8px;
  font-size: 40px;
  line-height: 52px;
}

.quote strong {
  color: #53a6fd;
  font-weight: 600;
}

.quote span {
  color: #95aaa1;
  font-size: 38px;
}

.excerpt {
  color: #c3cec9;
  font-size: 34px;
  line-height: 55px;
  white-space: nowrap;
}

.day {
  flex: none;
  align-self: center;
  min-width: 265px;
  margin: 98px 0 38px;
  border-radius: 24px;
  background: #151817;
  color: #fafafa;
  font-size: 34px;
  font-weight: 600;
  line-height: 55px;
  text-align: center;
}

/* Composer */

.composer {
  display: flex;
  flex: none;
  align-items: flex-start;
  height: 223px;
  padding: 25px 43px 0 36px;
  background: #101010;
}

.composer > button {
  height: 84px;
}

.field {
  display: flex;
  flex: 1;
  align-items: center;
  min-width: 0;
  height: 86px;
  margin: 0 50px 0 35px;
  border: 2px solid #333;
  border-radius: 43px;
  padding: 0 28px;
  background: #282828;
}

.field input {
  flex: 1;
  min-width: 0;
  border: 0;
  outline: 0;
  background: none;
  color: inherit;
  font: inherit;
  font-size: 43px;
}

.composer > button:last-child {
  margin-left: 51px;
}
```
